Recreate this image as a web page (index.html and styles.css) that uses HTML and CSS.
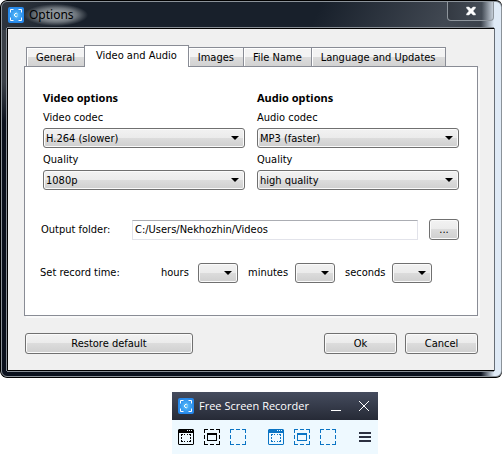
FILE: index.html
```html
<!DOCTYPE html>
<html lang="en">
<head>
<meta charset="utf-8">
<title>Options</title>
<link rel="stylesheet" href="styles.css">
</head>
<body>
<svg width="0" height="0" class="defs" aria-hidden="true">
  <radialGradient id="blue"><stop offset="0" stop-color="#5cc0fa"/><stop offset="1" stop-color="#2587ea"/></radialGradient>
  <symbol id="logo" viewBox="0 0 16 16">
    <rect width="16" height="16" rx="2" fill="url(#blue)"/>
    <path d="M2.500 5.500v-3h3M10.500 2.500h3v3M13.500 10.500v3h-3M5.500 13.500h-3v-3" fill="none" stroke="#fff"/>
    <path d="M9.500 7A1.700 1.700 0 1 0 9.500 9" fill="none" stroke="#fff"/>
  </symbol>
  <symbol id="window-area" viewBox="0 0 16 16">
    <path d="M1 0h14l1 1v14l-1 1H1l-1-1V1zM1 4v11h14V4z" fill="currentColor" fill-rule="evenodd"/>
    <path d="M9 1.500h1M11 1.500h1M13 1.500h1" stroke="#eef9ff"/>
    <path d="M3 5.500h2M6 5.500h1M9 5.500h1M11 5.500h2M3 12.500h2M6 12.500h1M9 12.500h1M11 12.500h2M3.500 5v2M3.500 8v2M3.500 11v2M12.500 5v2M12.500 8v2M12.500 11v2" stroke="currentColor"/>
  </symbol>
  <symbol id="frame" viewBox="0 0 16 16">
    <path d="M0 .5h4M6 .5h4M12 .5h4M0 15.500h4M6 15.500h4M12 15.500h4M.5 0v4M.5 6v4M.5 12v4M15.500 0v4M15.500 6v4M15.500 12v4" stroke="currentColor"/>
  </symbol>
  <symbol id="region" viewBox="0 0 16 16">
    <path d="M0 .5h4M6 .5h4M12 .5h4M0 15.500h4M6 15.500h4M12 15.500h4M.5 0v4M.5 6v4M.5 12v4M15.500 0v4M15.500 6v4M15.500 12v4" stroke="currentColor"/>
    <path d="M3 4h10v8H3zM4 6v5h8V6z" fill="currentColor" fill-rule="evenodd"/>
  </symbol>
</svg>

<main class="window">
  <header class="titlebar">
    <svg class="logo" aria-hidden="true"><use href="#logo"/></svg>
    <h1 class="title">Options</h1>
    <button class="close" type="button" aria-label="Close">
      <svg width="12" height="10" viewBox="0 0 12 10"><path d="M1.500 1h2.500l2 2 2-2h2.500v1L8 5l2.500 3v1H8L6 7 4 9H1.500V8L4 5 1.500 2z" fill="#fff" stroke="#dde1e6" stroke-width=".5"/></svg>
    </button>
  </header>
  <form class="client">
    <div class="tabs" role="tablist">
      <button type="button" class="tab" role="tab">General</button>
      <button type="button" class="tab active" role="tab" aria-selected="true">Video and Audio</button>
      <button type="button" class="tab" role="tab">Images</button>
      <button type="button" class="tab" role="tab">File Name</button>
      <button type="button" class="tab" role="tab">Language and Updates</button>
    </div>
    <section class="panel">
      <div class="columns">
        <div class="group">
          <h2 class="heading">Video options</h2>
          <label class="label" for="vcodec">Video codec</label>
          <div class="combo"><select id="vcodec"><option>H.264 (slower)</option></select></div>
          <label class="label" for="vquality">Quality</label>
          <div class="combo"><select id="vquality"><option>1080p</option></select></div>
        </div>
        <div class="group">
          <h2 class="heading">Audio options</h2>
          <label class="label" for="acodec">Audio codec</label>
          <div class="combo"><select id="acodec"><option>MP3 (faster)</option></select></div>
          <label class="label" for="aquality">Quality</label>
          <div class="combo"><select id="aquality"><option>high quality</option></select></div>
        </div>
      </div>
      <div class="row">
        <label class="row-label" for="folder">Output folder:</label>
        <input class="path" id="folder" type="text" value="C:/Users/Nekhozhin/Videos">
        <button class="button browse" type="button">...</button>
      </div>
      <div class="row time">
        <span class="row-label">Set record time:</span>
        <label class="unit" for="hours">hours</label>
        <div class="combo small"><select id="hours"><option></option></select></div>
        <label class="unit" for="minutes">minutes</label>
        <div class="combo small"><select id="minutes"><option></option></select></div>
        <label class="unit" for="seconds">seconds</label>
        <div class="combo small"><select id="seconds"><option></option></select></div>
      </div>
    </section>
    <footer class="actions">
      <button class="button restore" type="button">Restore default</button>
      <button class="button" type="button">Ok</button>
      <button class="button" type="button">Cancel</button>
    </footer>
  </form>
</main>

<aside class="recorder">
  <header class="recorder-bar">
    <svg class="logo" aria-hidden="true"><use href="#logo"/></svg>
    <span class="recorder-title">Free Screen Recorder</span>
    <button type="button" class="icon" aria-label="Minimize"><svg width="10" height="10"><path d="M0 9.500h10" stroke="#fff"/></svg></button>
    <button type="button" class="icon" aria-label="Close"><svg width="10" height="10"><path d="M0 0l10 10M10 0L0 10" stroke="#fff"/></svg></button>
  </header>
  <div class="tools">
    <button type="button" class="icon" aria-label="Capture window"><svg width="16" height="16"><use href="#window-area"/></svg></button>
    <button type="button" class="icon" aria-label="Capture region"><svg width="16" height="16"><use href="#region"/></svg></button>
    <button type="button" class="icon video" aria-label="Capture screen"><svg width="16" height="16"><use href="#frame"/></svg></button>
    <button type="button" class="icon video split" aria-label="Record window"><svg width="16" height="16"><use href="#window-area"/></svg></button>
    <button type="button" class="icon video" aria-label="Record region"><svg width="16" height="16"><use href="#region"/></svg></button>
    <button type="button" class="icon video" aria-label="Record screen"><svg width="16" height="16"><use href="#frame"/></svg></button>
    <button type="button" class="icon menu" aria-label="Menu"><svg width="12" height="10"><path d="M0 1h12M0 5h12M0 9h12" stroke="#2b3040" stroke-width="2"/></svg></button>
  </div>
</aside>
</body>
</html>
```
FILE: styles.css
```css
* { box-sizing: border-box; }

body {
  margin: 0;
  background: #fff;
  color: #000;
  font: 11px/14px "DejaVu Sans Condensed", "Noto Sans", sans-serif;
}

button, input, select { font: inherit; color: inherit; margin: 0; }

h1, h2 { margin: 0; font-size: inherit; }

.defs { position: absolute; }

.window {
  padding: 0 7px 5px 4px;
  border: 1px solid #8b9299;
  border-radius: 6px;
  box-shadow: -1px 0 #000, 0 -1px #000, 0 1px #000;
  margin: 1px 1px 0;
  background:
    linear-gradient(90deg, transparent calc(100% - 20px), #dfeaf6 calc(100% - 7px)),
    linear-gradient(115deg, #303740 0, #18202b 70px, #18202b 290px, #414852 410px, #313841 500px) 0 0 / 100% 28px no-repeat,
    linear-gradient(#3a4048, #3a4048 80px, transparent 120px) 0 0 / 5px 100% no-repeat,
    #0b111d;
}

.titlebar {
  display: flex;
  align-items: center;
  height: 25px;
  padding-left: 2px;
}

.logo { display: block; width: 16px; height: 16px; }

.title {
  margin-right: auto;
  padding: 0 14px 0 5px;
  font: 12px/22px "Noto Sans", sans-serif;
  background: radial-gradient(closest-side, #8b9298 40%, #6b7279 65%, transparent);
}

.close {
  align-self: flex-start;
  display: flex;
  justify-content: center;
  align-items: center;
  width: 47px;
  height: 19px;
  padding: 0;
  border: 1px solid #8e959c;
  border-top: 0;
  border-radius: 0 0 4px 4px;
  background: linear-gradient(90deg, #343a43, #444c56 75%, #c5ced8);
}

.client {
  padding: 16px 16px;
  background: #f0f0f0;
  border: 1px solid #000;
  border-right: 0;
  box-shadow: -1px 0 #878d94, 0 -1px #878d94, 0 1px #878d94, 1px 0 #666d75;
  margin: 1px 0 0 1px;
}

.tabs {
  display: flex;
  align-items: flex-end;
  padding-left: 2px;
}

.tab {
  height: 19px;
  padding: 1px 9px 0;
  border: 1px solid #898c95;
  border-bottom: 0;
  box-shadow: inset 1px 1px #fff;
  background: linear-gradient(#f3f3f3 50%, #dcdcdc 50%, #d2d2d2);
}

.tab + .tab { border-left: 0; }

.tab.active {
  position: relative;
  height: 22px;
  margin-bottom: -1px;
  padding: 0 11px 1px;
  border-left: 1px solid #898c95;
  margin-left: -1px;
  background: #fff;
}

.panel {
  padding: 23px 18px 32px;
  background: #fff;
  border: 1px solid #898c95;
  box-shadow: 2px 2px #f9f9f9;
}

.columns {
  display: grid;
  grid-template-columns: 1fr 1fr;
  gap: 12px;
}

.group { display: grid; }

.heading { font: 700 11px/16px "Noto Sans", sans-serif; }

.label { padding: 5px 0 3px; }

.combo { position: relative; height: 20px; }

.combo::after {
  content: "";
  position: absolute;
  right: 6px;
  top: 8px;
  border: 4px solid transparent;
  border-top-color: #000;
  border-bottom: 0;
  pointer-events: none;
}

.combo select, .button {
  border: 1px solid #707070;
  border-radius: 3px;
  box-shadow: inset 0 0 0 1px #fafafa;
  background: linear-gradient(#f2f2f2, #ebebeb 50%, #dcdcdc 50%, #cfcfcf);
}

.combo select {
  display: block;
  appearance: none;
  width: 100%;
  height: 20px;
  padding: 1px 16px 0 2px;
}

.row {
  display: flex;
  align-items: center;
  margin: 29px 0 0 -2px;
}

.row.time { margin-top: 23px; margin-left: -3px; }

.row-label { width: 91px; }

.path {
  flex: 1;
  min-width: 0;
  height: 20px;
  padding: 0 2px;
  border: 1px solid #e2e3ea;
  border-top-color: #abadb3;
  background: #fff;
}

.button { height: 21px; width: 73px; padding: 0; }

.browse { width: 30px; margin-left: 11px; }

.time .row-label { width: 111px; }

.unit { width: 47px; padding-left: 10px; }

.small { width: 40px; }

.small + .unit { width: 57px; }

.actions {
  display: flex;
  gap: 8px;
  padding: 17px 0 0 1px;
}

.restore { width: 168px; margin-right: auto; }

.recorder {
  width: 206px;
  margin: 15px 0 0 172px;
  background: #eef9ff;
}

.recorder-bar {
  display: flex;
  align-items: center;
  height: 28px;
  padding: 0 9px 0 6px;
  gap: 18px;
  color: #fff;
  background: linear-gradient(#454c5e, #262a36);
}

.recorder-title {
  margin: 0 auto 0 -13px;
  font-family: "Open Sans", sans-serif;
  white-space: nowrap;
}

.icon {
  display: block;
  padding: 0;
  border: 0;
  background: none;
  line-height: 0;
}

.icon svg { display: block; }

.tools {
  display: flex;
  align-items: center;
  gap: 10px;
  height: 34px;
  padding: 0 7px 0 6px;
}

.video { color: #0a74c4; }

.split { margin-left: 12px; }

.menu { margin-left: auto; }
```
